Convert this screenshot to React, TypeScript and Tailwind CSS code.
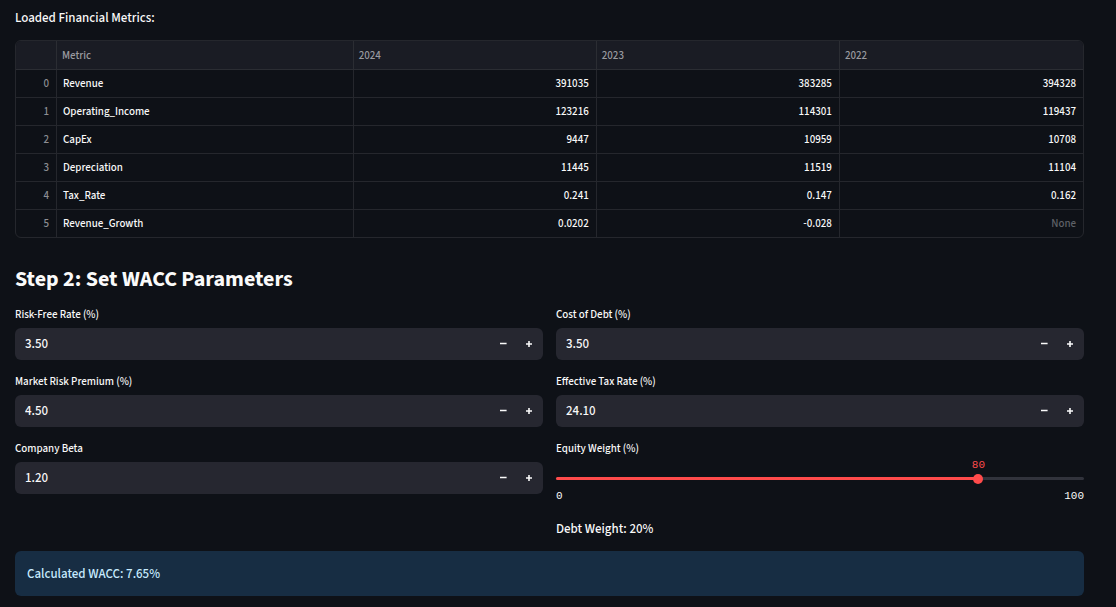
import { useId, useState } from "react";

type Row = { metric: string; values: (string | null)[] };

const YEARS = ["2024", "2023", "2022"];

const ROWS: Row[] = [
  { metric: "Revenue", values: ["391035", "383285", "394328"] },
  { metric: "Operating_Income", values: ["123216", "114301", "119437"] },
  { metric: "CapEx", values: ["9447", "10959", "10708"] },
  { metric: "Depreciation", values: ["11445", "11519", "11104"] },
  { metric: "Tax_Rate", values: ["0.241", "0.147", "0.162"] },
  { metric: "Revenue_Growth", values: ["0.0202", "-0.028", null] },
];

function MetricsTable() {
  return (
    <div className="overflow-hidden rounded-md border border-[#25272d]">
      <table className="w-full table-fixed border-separate border-spacing-0 text-[11px] leading-4">
        <colgroup>
          <col className="w-[41px]" />
          <col className="w-[27.8%]" />
          <col />
          <col />
          <col />
        </colgroup>
        <thead>
          <tr className="h-[29px] bg-[#1a1c24] text-left text-[#9a9ba0]">
            <th className="border-r border-b border-[#2b2d33] p-0" aria-label="Index" />
            <th className="border-r border-b border-[#2b2d33] px-[5px] pt-0.5 pb-0 font-medium">Metric</th>
            {YEARS.map((year) => (
              <th
                key={year}
                className="border-r border-b border-[#2b2d33] px-[5px] pt-0.5 pb-0 font-medium last:border-r-0"
              >
                {year}
              </th>
            ))}
          </tr>
        </thead>
        <tbody className="[&>tr:last-child>*]:border-b-0">
          {ROWS.map((row, index) => (
            <tr key={row.metric} className="h-7 last:h-[27px]">
              <th
                scope="row"
                className="border-r border-b border-[#25272d] py-0 pr-[7px] pl-0 text-right font-medium text-[#8d8f94]"
              >
                {index}
              </th>
              <td className="border-r border-b border-[#25272d] px-1.5 py-0 font-medium">{row.metric}</td>
              {row.values.map((value, i) => (
                <td
                  key={YEARS[i]}
                  className="border-r border-b border-[#25272d] px-[7px] py-0 text-right font-medium last:border-r-0"
                >
                  {value ?? <span className="text-[#5f6167]">None</span>}
                </td>
              ))}
            </tr>
          ))}
        </tbody>
      </table>
    </div>
  );
}

type NumberFieldProps = {
  label: string;
  value: string;
  step: number;
  onChange: (value: string) => void;
};

function NumberField({ label, value, step, onChange }: NumberFieldProps) {
  const id = useId();
  const shift = (delta: number) => onChange((Number(value) + delta).toFixed(2));
  const button = "flex w-[26px] items-center justify-center hover:bg-[#ff4b4b]";
  return (
    <div className="flex flex-col gap-[5px]">
      <label htmlFor={id} className="text-[11px] leading-4 font-medium">
        {label}
      </label>
      <div className="flex h-8 overflow-hidden rounded-md bg-[#262730] pr-px">
        <input
          id={id}
          type="number"
          value={value}
          step={step}
          onChange={(event) => onChange(event.target.value)}
          className="min-w-0 flex-1 appearance-none bg-transparent px-2.5 text-[13px] leading-[17px] font-medium outline-none [-moz-appearance:textfield] [&::-webkit-inner-spin-button]:appearance-none"
        />
        <button type="button" aria-label={`Decrease ${label}`} className={button} onClick={() => shift(-step)}>
          <svg viewBox="0 0 7 6" className="h-1.5 w-[7px]" fill="currentColor">
            <path d="M0 1.7h6.6v1.6h-6.6z" />
          </svg>
        </button>
        <button type="button" aria-label={`Increase ${label}`} className={button} onClick={() => shift(step)}>
          <svg viewBox="0 0 6 6" className="size-1.5" fill="currentColor">
            <path d="M2.2 0h1.6v2.2h2.2v1.6h-2.2v2.2h-1.6v-2.2h-2.2v-1.6h2.2z" />
          </svg>
        </button>
      </div>
    </div>
  );
}

type SliderProps = { label: string; value: number; onChange: (value: number) => void };

function Slider({ label, value, onChange }: SliderProps) {
  const id = useId();
  return (
    <div className="flex flex-col">
      <label htmlFor={id} className="text-[11px] leading-4 font-medium">
        {label}
      </label>
      <div className="relative mt-5 h-[3px] rounded-full bg-[#31333c]">
        <div className="h-full rounded-full bg-[#ff4b4b]" style={{ width: `${value}%` }} />
        <output
          htmlFor={id}
          className="absolute bottom-[7px] -translate-x-1/2 font-['Liberation_Mono',monospace] text-[11px] leading-4 text-[#ff4b4b]"
          style={{ left: `${value}%` }}
        >
          {value}
        </output>
        <input
          id={id}
          type="range"
          min={0}
          max={100}
          value={value}
          onChange={(event) => onChange(Number(event.target.value))}
          className="absolute -inset-x-[5px] -top-1 h-3 w-[calc(100%+10px)] appearance-none bg-transparent outline-none [&::-webkit-slider-thumb]:size-2.5 [&::-webkit-slider-thumb]:appearance-none [&::-webkit-slider-thumb]:rounded-full [&::-webkit-slider-thumb]:bg-[#ff4b4b]"
        />
      </div>
      <div className="mt-2 flex justify-between font-['Liberation_Mono',monospace] text-[11px] leading-4">
        <span>0</span>
        <span>100</span>
      </div>
    </div>
  );
}

export default function App() {
  const [riskFree, setRiskFree] = useState("3.50");
  const [premium, setPremium] = useState("4.50");
  const [beta, setBeta] = useState("1.20");
  const [debtCost, setDebtCost] = useState("3.50");
  const [taxRate, setTaxRate] = useState("24.10");
  const [equity, setEquity] = useState(80);

  const equityCost = Number(riskFree) + Number(beta) * Number(premium);
  const afterTaxDebt = Number(debtCost) * (1 - Number(taxRate) / 100);
  const wacc = (equity * equityCost + (100 - equity) * afterTaxDebt) / 100;

  return (
    <main className="min-h-screen bg-[#0e1117] pt-2.5 pr-8 pb-2.5 pl-[15px] font-['Source_Sans_3','Noto_Sans_CJK_SC',sans-serif] text-[#fafafa]">
      <p className="mb-[13px] text-[13px] leading-[17px] font-medium">Loaded Financial Metrics:</p>
      <MetricsTable />
      <h2 className="mt-[25px] mb-3 text-[22px] leading-8 font-bold">Step 2: Set WACC Parameters</h2>
      <div className="grid grid-cols-2 gap-x-[13px]">
        <div className="flex flex-col gap-3.5">
          <NumberField label="Risk-Free Rate (%)" value={riskFree} step={0.1} onChange={setRiskFree} />
          <NumberField label="Market Risk Premium (%)" value={premium} step={0.1} onChange={setPremium} />
          <NumberField label="Company Beta" value={beta} step={0.1} onChange={setBeta} />
        </div>
        <div className="flex flex-col gap-3.5">
          <NumberField label="Cost of Debt (%)" value={debtCost} step={0.1} onChange={setDebtCost} />
          <NumberField label="Effective Tax Rate (%)" value={taxRate} step={0.1} onChange={setTaxRate} />
          <Slider label="Equity Weight (%)" value={equity} onChange={setEquity} />
          <p className="mt-[3px] text-[13px] leading-[17px] font-medium">Debt Weight: {100 - equity}%</p>
        </div>
      </div>
      <div
        role="status"
        className="mt-[13px] rounded-md bg-[#172d43] px-3 pt-[15px] pb-[13px] text-[13px] leading-[17px] font-medium text-[#c7ebff]"
      >
        Calculated WACC: {wacc.toFixed(2)}%
      </div>
    </main>
  );
}
